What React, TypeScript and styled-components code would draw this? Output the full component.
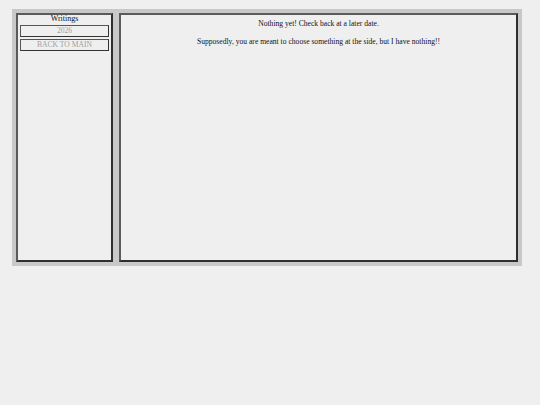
import styled, { createGlobalStyle } from 'styled-components';

const GlobalStyle = createGlobalStyle`
  html, body {
    margin: 0;
    padding: 0;
    background: #f0eff0;
    font-family: "Liberation Serif", "Times New Roman", serif;
  }
`;

const Page = styled.div`
  padding: 9px 0 0 12px;
`;

const Frame = styled.div`
  width: 510px;
  height: 257px;
  box-sizing: border-box;
  padding: 4px;
  background: #c9c7c9;
  display: flex;
  gap: 6px;
`;

const Panel = styled.div`
  box-sizing: border-box;
  height: 100%;
  background: #f0eff0;
  border: 2px solid;
  border-color: #5a5a5a #2e2e2e #2e2e2e #5a5a5a;
`;

const Sidebar = styled(Panel)`
  width: 97px;
  padding: 0 2px;
  display: flex;
  flex-direction: column;
  gap: 2px;
`;

const Main = styled(Panel)`
  flex: 1;
  padding-top: 4px;
  text-align: center;
`;

const SideTitle = styled.div`
  font-size: 8px;
  line-height: 8px;
  color: #111;
  text-align: center;
`;

const NavButton = styled.div`
  box-sizing: border-box;
  height: 12px;
  border: 1.5px solid;
  border-color: #555 #333 #333 #555;
  font-size: 7.6px;
  line-height: 9px;
  color: #a09ea0;
  text-align: center;
  text-transform: uppercase;
`;

const Line = styled.p`
  margin: 0 0 8px;
  font-size: 7.6px;
  line-height: 10px;
  color: #111;
`;

export default function App() {
  return (
    <Page>
      <GlobalStyle />
      <Frame>
        <Sidebar>
          <SideTitle>Writings</SideTitle>
          <NavButton>2026</NavButton>
          <NavButton>Back to main</NavButton>
        </Sidebar>
        <Main>
          <Line>Nothing yet! Check back at a later date.</Line>
          <Line>Supposedly, you are meant to choose something at the side, but I have nothing!!</Line>
        </Main>
      </Frame>
    </Page>
  );
}
